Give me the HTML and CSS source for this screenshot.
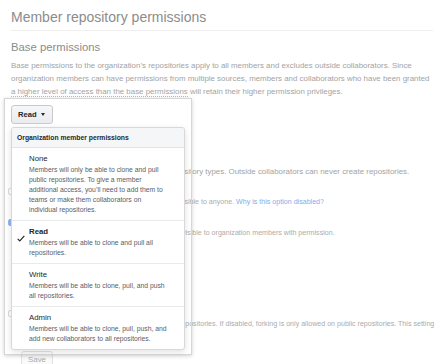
FILE: index.html
```html
<!DOCTYPE html>
<html lang="en">
<head>
    <meta charset="UTF-8">
    <title>Member repository permissions</title>
    <link rel="stylesheet" href="styles.css">
</head>
<body>
    <main class="page">
        <h2 class="page-title">Member repository permissions</h2>

        <h3 class="section-title">Base permissions</h3>
        <p class="section-text">
            Base permissions to the organization’s repositories apply to all members and excludes outside collaborators. Since<br>
            organization members can have permissions from multiple sources, members and collaborators who have been granted<br>
            <span class="dotted">a higher level of access than the base permissions</span> will retain their higher permission privileges.
        </p>

        <h3 class="section-title creation">Repository creation</h3>
        <p class="section-text">Members will be able to create only selected repository types. Outside collaborators can never create repositories.</p>

        <div class="check-row first">
            <span class="check-box"></span>
            <div>
                <div class="check-label">Public</div>
                <p class="check-note">Members will be able to create public repositories, visible to anyone. <a href="#">Why is this option disabled?</a></p>
            </div>
        </div>
        <div class="check-row">
            <span class="check-box checked"></span>
            <div>
                <div class="check-label">Private</div>
                <p class="check-note">Members will be able to create private repositories, visible to organization members with permission.</p>
            </div>
        </div>

        <h3 class="section-title forking">Repository forking</h3>
        <div class="check-row first">
            <span class="check-box"></span>
            <div>
                <div class="check-label">Allow forking of private repositories</div>
                <p class="check-note nowrap">If enabled, forking is allowed on private and public repositories. If disabled, forking is only allowed on public repositories. This setting<br>is also configurable per-repository.</p>
            </div>
        </div>
        <button class="save-btn">Save</button>
    </main>

    <div class="highlight">
        <button class="select-btn">Read <span class="caret"></span></button>
        <div class="select-menu">
            <div class="menu-header">Organization member permissions</div>
            <div class="menu-item">
                <span class="menu-icon"></span>
                <div class="menu-text">
                    <div class="menu-title">None</div>
                    <div class="menu-desc">Members will only be able to clone and pull public repositories. To give a member additional access, you’ll need to add them to teams or make them collaborators on individual repositories.</div>
                </div>
            </div>
            <div class="menu-item selected">
                <span class="menu-icon">
                    <svg width="8" height="7" viewBox="0 0 12 10"><path d="M1 5.5 L4.2 8.6 L11 1.2" fill="none" stroke="#24292e" stroke-width="1.8"/></svg>
                </span>
                <div class="menu-text">
                    <div class="menu-title">Read</div>
                    <div class="menu-desc">Members will be able to clone and pull all repositories.</div>
                </div>
            </div>
            <div class="menu-item">
                <span class="menu-icon"></span>
                <div class="menu-text">
                    <div class="menu-title">Write</div>
                    <div class="menu-desc">Members will be able to clone, pull, and push all repositories.</div>
                </div>
            </div>
            <div class="menu-item">
                <span class="menu-icon"></span>
                <div class="menu-text">
                    <div class="menu-title">Admin</div>
                    <div class="menu-desc">Members will be able to clone, pull, push, and add new collaborators to all repositories.</div>
                </div>
            </div>
        </div>
    </div>
</body>
</html>
```

FILE: styles.css
```css
* {
    margin: 0;
    padding: 0;
    box-sizing: border-box;
}
body {
    font-family: 'Liberation Sans', Arial, sans-serif;
    background: #fff;
    color: #999;
    overflow: hidden;
}
.page {
    padding: 8px 11px;
}
.page-title {
    font-size: 14px;
    font-weight: 400;
    line-height: 18px;
    color: #8c8c8c;
    padding-bottom: 4px;
    border-bottom: 1px solid #f0f0f0;
}
.section-title {
    font-size: 11.3px;
    font-weight: 400;
    line-height: 14px;
    color: #8c8c8c;
    margin-top: 9px;
}
.section-text {
    font-size: 7.9px;
    line-height: 13px;
    color: #a3a3a3;
    margin-top: 5px;
}
.dotted {
    border-bottom: 1px dotted #bbb;
}
.section-title.creation {
    margin-top: 48px;
}
.section-title.forking {
    margin-top: 48px;
}
.check-row {
    display: flex;
    gap: 5px;
    margin-top: 9px;
    margin-left: -3px;
}
.check-row.first {
    margin-top: 7px;
}
.check-box {
    width: 7px;
    height: 7px;
    margin-top: 3px;
    border: 1px solid #d8d8d8;
    border-radius: 2px;
    flex-shrink: 0;
}
.check-box.checked {
    background: #8fb6ee;
    border-color: #8fb6ee;
}
.check-label {
    font-size: 7.9px;
    line-height: 12px;
    font-weight: 700;
    color: #a3a3a3;
}
.check-note {
    font-size: 7.1px;
    line-height: 10px;
    color: #ababab;
}
.nowrap {
    white-space: nowrap;
}
a {
    color: #83acea;
    text-decoration: none;
}
.save-btn {
    display: block;
    margin: 12px 0 0 10px;
    padding: 3px 6px;
    font-family: inherit;
    font-size: 7.9px;
    color: #aaa;
    background: #fafafa;
    border: 1px solid #e2e2e2;
    border-radius: 3px;
}

/* highlighted dropdown */
.highlight {
    position: absolute;
    left: 4px;
    top: 98px;
    width: 188px;
    height: 257px;
    padding: 6px;
    border: 1px solid #d6d6d6;
    box-shadow: 0 1px 4px rgba(0, 0, 0, 0.18);
}
.select-btn {
    display: flex;
    align-items: center;
    gap: 4px;
    height: 19px;
    width: 42px;
    padding: 0 6px;
    font-family: inherit;
    font-size: 7.6px;
    font-weight: 700;
    color: #24292e;
    background: linear-gradient(#f6f7f8, #e9ebee);
    border: 1px solid #c8cacd;
    border-radius: 3px;
}
.caret {
    border-top: 3px solid #24292e;
    border-left: 2.5px solid transparent;
    border-right: 2.5px solid transparent;
}
.select-menu {
    margin-top: 3px;
    width: 174px;
    border: 1px solid #d8d8d8;
    border-radius: 3px;
    background: #fff;
    box-shadow: 0 2px 6px rgba(0, 0, 0, 0.12);
    overflow: hidden;
}
.menu-header {
    height: 20px;
    line-height: 19px;
    padding-left: 5px;
    font-size: 6.8px;
    font-weight: 700;
    color: #24292e;
    background: #f5f6f8;
    border-bottom: 1px solid #e3e4e6;
}
.menu-item {
    display: flex;
    padding: 6px 14px 5px 5px;
    border-bottom: 1px solid #e9eaec;
}
.menu-item:last-child {
    border-bottom: none;
}
.menu-icon {
    width: 12px;
    flex-shrink: 0;
    padding-top: 1px;
}
.menu-title {
    font-size: 7.8px;
    line-height: 10px;
    font-weight: 400;
    color: #24292e;
    margin-bottom: 1px;
}
.selected .menu-title {
    font-weight: 700;
}
.menu-desc {
    font-size: 6.8px;
    line-height: 10px;
    color: #586069;
}
```
